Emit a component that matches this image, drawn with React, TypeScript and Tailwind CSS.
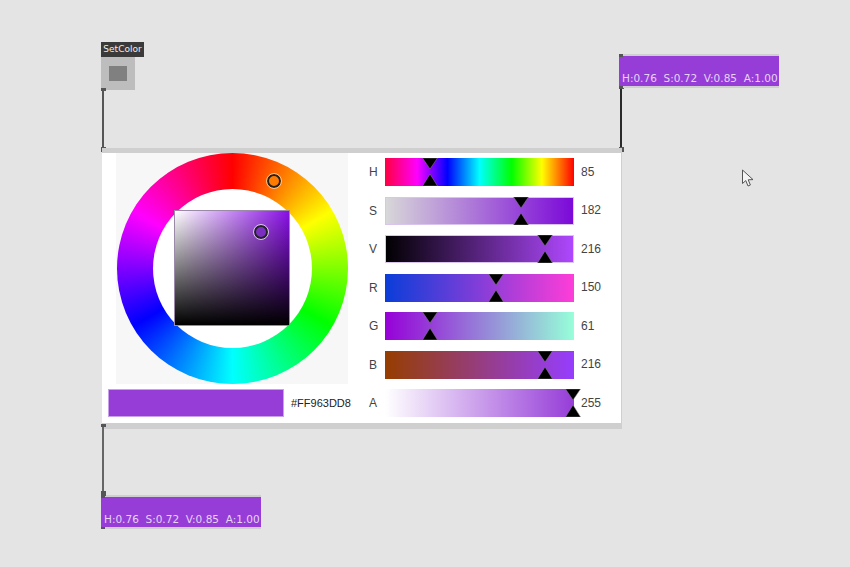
const sliders = [
  { label: 'H', value: 85, thumb: 45, bar: 'bg-[linear-gradient(to_right,#ff0040,#ff00ff_17%,#0000ff_33%,#00ffff_50%,#00ff00_67%,#ffff00_83%,#ff0000)]' },
  { label: 'S', value: 182, thumb: 136, bar: 'bg-[linear-gradient(to_right,#d8d8d8,#7b08d8)] shadow-[inset_0_0_0_1px_#d9c4ee]' },
  { label: 'V', value: 216, thumb: 160, bar: 'bg-[linear-gradient(to_right,#000000,#b048ff)] shadow-[inset_0_0_0_1px_#d9c4ee]' },
  { label: 'R', value: 150, thumb: 111, bar: 'bg-[linear-gradient(to_right,#0a3dd8,#ff3dd8)]' },
  { label: 'G', value: 61, thumb: 45, bar: 'bg-[linear-gradient(to_right,#9600d8,#96ffd8)]' },
  { label: 'B', value: 216, thumb: 160, bar: 'bg-[linear-gradient(to_right,#963d00,#963dff)]' },
  { label: 'A', value: 255, thumb: 188, bar: 'bg-[linear-gradient(to_right,#ffffff,#963dd8)]' },
]

function Thumb({ x }: { x: number }) {
  return (
    <svg className="absolute top-0 h-[28px] w-[16px]" style={{ left: x - 8 }} viewBox="0 0 16 28">
      <polygon points="0.5,0 15.5,0 8,11" fill="#000" stroke="#888" strokeWidth="0.5" />
      <polygon points="8,16 15.5,28 0.5,28" fill="#000" stroke="#888" strokeWidth="0.5" />
    </svg>
  )
}

function Wire({ className, line }: { className: string; line: string }) {
  return (
    <div className={`absolute flex w-[5px] flex-col ${className}`}>
      <div className="h-[3px] bg-[#555]" />
      <div className={`ml-[1px] w-[2px] flex-1 ${line}`} />
      <div className="h-[5px] bg-[#555]" />
    </div>
  )
}

function OutputNode({ className }: { className: string }) {
  return (
    <div className={`absolute w-[160px] ${className}`}>
      <div className="h-[2px] bg-[#cfcfcf]" />
      <div className="flex h-[30px] items-end bg-[#963dd8] pb-[1px] pl-[3px] font-['DejaVu_Sans',sans-serif] text-[10.5px] leading-[13px] whitespace-pre text-[#e6d4f5]">
        H:0.76  S:0.72  V:0.85  A:1.00
      </div>
      <div className="h-[2px] bg-[#cfcfcf]" />
      <div className="absolute top-0 left-0 h-[3px] w-[4px] bg-[#555]" />
      <div className="absolute bottom-0 left-0 h-[2px] w-[4px] bg-[#555]" />
    </div>
  )
}

export default function App() {
  return (
    <div className="relative h-[567px] w-[850px] overflow-hidden bg-[#e4e4e4] font-['Liberation_Sans',sans-serif]">
      {/* SetColor node */}
      <div className="absolute top-[42px] left-[101px] flex flex-col items-start">
        <div className="w-[43px] bg-[#3a3a3a] text-center font-['DejaVu_Sans',sans-serif] text-[9px] leading-[15px] text-[#eeeeee]">
          SetColor
        </div>
        <div className="flex h-[33px] w-[34px] items-center justify-center bg-[#bdbdbd]">
          <div className="h-[15px] w-[18px] bg-[#808080]" />
        </div>
      </div>

      <Wire className="top-[88px] left-[101px] h-[64px]" line="bg-[#555]" />
      <Wire className="top-[86px] left-[619px] h-[66px]" line="bg-[#2a2a2a]" />

      <OutputNode className="top-[54px] left-[619px]" />
      <OutputNode className="top-[495px] left-[101px]" />

      {/* colour picker panel */}
      <div className="absolute top-[148px] left-[102px] flex h-[281px] w-[520px] border-t-[5px] border-r border-b-[6px] border-[#cfcfcf] bg-white text-[12px] text-[#333]">
        <div className="flex w-[256px] shrink-0 flex-col pl-[6px]">
          <div className="ml-[8px] flex h-[231px] w-[232px] items-center justify-center bg-[#f7f7f7]">
            <div className="relative flex h-[231px] w-[231px] items-center justify-center rounded-full bg-[conic-gradient(#ff0000,#ffff00_60deg,#00ff00_120deg,#00ffff_180deg,#0000ff_240deg,#ff00ff_300deg,#ff0000)]">
              <div className="h-[159px] w-[159px] rounded-full bg-white" />
              <div className="absolute h-[116px] w-[116px] -translate-y-px border border-[#9a8aa8] bg-[linear-gradient(to_top,#000000,transparent),linear-gradient(to_right,#ffffff,#8a10e6)]" />
              <div className="absolute top-[21px] left-[150px] h-[14px] w-[14px] rounded-full border-2 border-[#222] bg-[#ff7a00] outline outline-[#ffc48a]" />
              <div className="absolute top-[72px] left-[137px] h-[14px] w-[14px] rounded-full border-2 border-[#222] bg-[#7a2fc0] outline outline-[#d9c4ee]" />
            </div>
          </div>
          <div className="mt-[5px] flex items-center">
            <div className="h-[28px] w-[176px] border border-[#c9a0ea] bg-[#963dd8]" />
            <span className="ml-[7px] text-[11px] text-[#222]">#FF963DD8</span>
          </div>
        </div>
        <div className="flex h-[264px] flex-col justify-between pt-[5px]">
          {sliders.map(s => (
            <div key={s.label} className="flex h-[28px] items-center">
              <span className="w-[27px] pl-[11px] text-[#444]">{s.label}</span>
              <div className={`relative h-[28px] w-[189px] ${s.bar}`}>
                <Thumb x={s.thumb} />
              </div>
              <span className="ml-[7px] pb-[1px] text-[#444]">{s.value}</span>
            </div>
          ))}
        </div>
      </div>

      <Wire className="top-[424px] left-[101px] h-[72px]" line="bg-[#666]" />

      {/* mouse pointer */}
      <svg className="absolute top-[169px] left-[741px]" width="14" height="19" viewBox="0 0 14 19">
        <path d="M1.5 1 L1.5 14.5 L4.8 11.6 L7 17 L9.4 16 L7.2 10.8 L12 10.6 Z" fill="#f4f4f4" stroke="#555" strokeWidth="1" />
      </svg>
    </div>
  )
}
